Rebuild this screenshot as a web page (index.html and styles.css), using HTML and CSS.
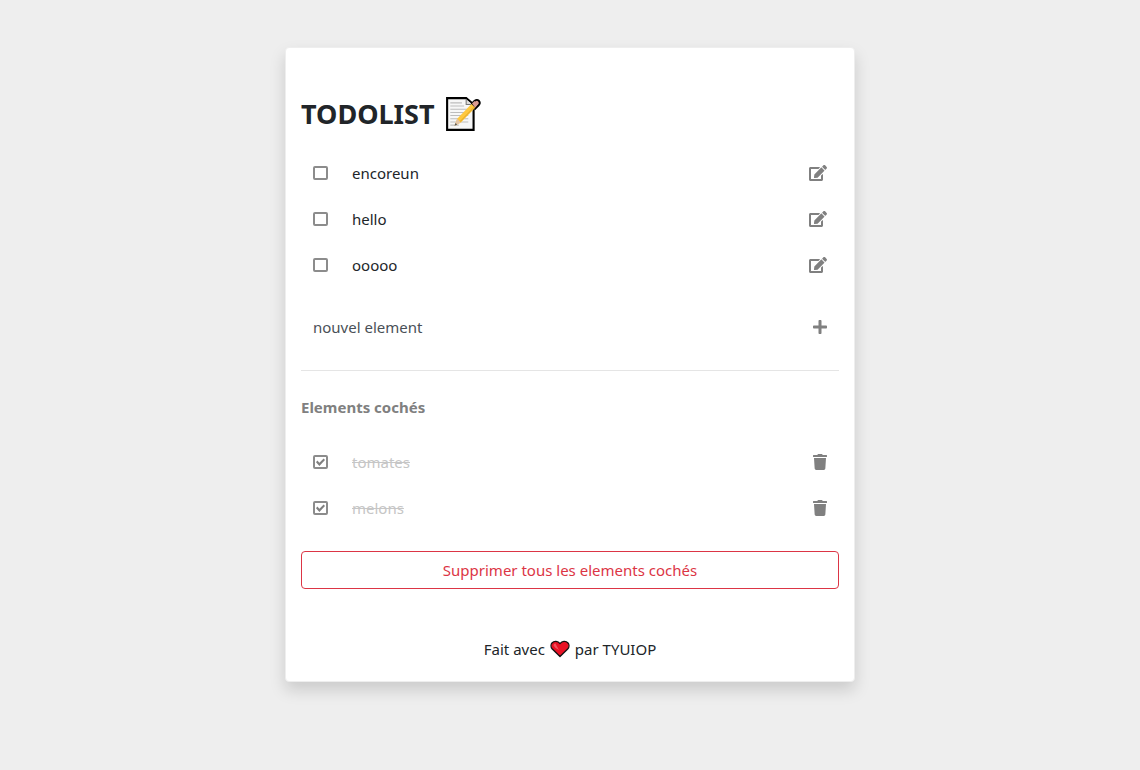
FILE: index.html
```html
<!DOCTYPE html>
<html lang="fr">
<head>
  <meta charset="utf-8">
  <meta name="viewport" content="width=device-width, initial-scale=1">
  <title>Todolist</title>
  <link rel="stylesheet" href="styles.css">
</head>
<body>
  <svg class="sprite" aria-hidden="true">
    <symbol id="icon-edit" viewBox="0 0 576 512"><path d="M402.6 83.2l90.2 90.2c3.8 3.8 3.8 10 0 13.800L274.400 405.600l-92.800 10.300c-12.400 1.400-22.900-9.100-21.500-21.500l10.300-92.800L388.800 83.200c3.800-3.800 10-3.800 13.800 0zm162-22.900l-48.800-48.800c-15.200-15.200-39.900-15.200-55.200 0l-35.400 35.400c-3.800 3.800-3.800 10 0 13.800l90.200 90.200c3.800 3.800 10 3.800 13.800 0l35.400-35.400c15.200-15.300 15.200-40 0-55.200zM384 346.200V448H64V128h229.800c3.200 0 6.200-1.300 8.500-3.500l40-40c7.600-7.600 2.200-20.500-8.500-20.500H48C21.500 64 0 85.500 0 112v352c0 26.500 21.500 48 48 48h352c26.500 0 48-21.500 48-48V306.200c0-10.700-12.900-16-20.500-8.500l-40 40c-2.200 2.300-3.500 5.300-3.500 8.500z"/></symbol>
    <symbol id="icon-trash" viewBox="0 0 448 512"><path d="M432 32H312l-9.400-18.700A24 24 0 0 0 281.100 0H166.800a23.720 23.720 0 0 0-21.400 13.300L136 32H16A16 16 0 0 0 0 48v32a16 16 0 0 0 16 16h416a16 16 0 0 0 16-16V48a16 16 0 0 0-16-16zM53.200 467a48 48 0 0 0 47.900 45h245.800a48 48 0 0 0 47.900-45L416 128H32z"/></symbol>
    <symbol id="icon-plus" viewBox="0 0 448 512"><path d="M416 208H272V64c0-17.670-14.330-32-32-32h-32c-17.670 0-32 14.330-32 32v144H32c-17.670 0-32 14.330-32 32v32c0 17.670 14.330 32 32 32h144v144c0 17.670 14.330 32 32 32h32c17.670 0 32-14.330 32-32V304h144c17.670 0 32-14.330 32-32v-32c0-17.670-14.330-32-32-32z"/></symbol>
  </svg>

  <main class="card">
    <h1 class="title">TODOLIST
      <svg class="memo" viewBox="0 0 34 34" aria-hidden="true">
        <path d="M2 2h18l7 6v24H2z" fill="#f7f7f7" stroke="#000" stroke-width="2"/>
        <path d="M20 3v5h6" fill="#ddd" stroke="#777"/>
        <path d="M5 6.500h11M5 9.500h13M5 12.500h17M5 15.500h17M5 18.500h17M5 21.500h17M5 24.500h17M5 27.500h8" stroke="#bdbdbd"/>
        <path d="M25.500 7L28 4.500q2.200-1.700 4 0 1.700 2 0 4L28.500 12z" fill="#d99a90" stroke="#000" stroke-width="1.800"/>
        <path d="M25 7.500L11.500 21.500l-2.500 6.500 6-3L28.500 11z" fill="#ffc83d"/>
        <path d="M27.800 10.300L14.300 24.300" stroke="#e9ae2c"/>
        <path d="M25.500 7L28 4.800l3 3L28.500 11z" fill="#d99a90"/>
        <path d="M11.500 21.500L9 28l6-3z" fill="#e3c4a6"/>
        <path d="M10 25.500L9 28l2.500-1.200z" fill="#555"/>
      </svg>
    </h1>

    <ul class="list">
      <li class="row">
        <input class="tick" type="checkbox" id="t1"><label class="name" for="t1">encoreun</label>
        <button class="action" type="button" aria-label="Modifier encoreun"><svg class="icon icon-wide"><use href="#icon-edit"/></svg></button>
      </li>
      <li class="row">
        <input class="tick" type="checkbox" id="t2"><label class="name" for="t2">hello</label>
        <button class="action" type="button" aria-label="Modifier hello"><svg class="icon icon-wide"><use href="#icon-edit"/></svg></button>
      </li>
      <li class="row">
        <input class="tick" type="checkbox" id="t3"><label class="name" for="t3">ooooo</label>
        <button class="action" type="button" aria-label="Modifier ooooo"><svg class="icon icon-wide"><use href="#icon-edit"/></svg></button>
      </li>
    </ul>

    <form class="row new-item">
      <input class="field" type="text" placeholder="nouvel element" aria-label="nouvel element">
      <button class="action" type="button" aria-label="Ajouter"><svg class="icon"><use href="#icon-plus"/></svg></button>
    </form>

    <hr class="rule">

    <h2 class="subtitle">Elements cochés</h2>
    <ul class="list">
      <li class="row">
        <input class="tick" type="checkbox" id="d1" checked><label class="name" for="d1">tomates</label>
        <button class="action" type="button" aria-label="Supprimer tomates"><svg class="icon"><use href="#icon-trash"/></svg></button>
      </li>
      <li class="row">
        <input class="tick" type="checkbox" id="d2" checked><label class="name" for="d2">melons</label>
        <button class="action" type="button" aria-label="Supprimer melons"><svg class="icon"><use href="#icon-trash"/></svg></button>
      </li>
    </ul>

    <button class="clear" type="button">Supprimer tous les elements cochés</button>

    <footer class="footer">
      <span>Fait avec</span>
      <svg class="heart" viewBox="0 0 20 18" aria-hidden="true">
        <path d="M10 16.500L2.300 9C.5 7 .7 4.200 2.200 2.700 4.300.7 7.800.9 10 3.600 12.200.9 15.700.7 17.800 2.700c1.500 1.500 1.700 4.300-.1 6.300z" fill="#e81224" stroke="#111" stroke-width="1.300" stroke-linejoin="round"/>
        <path d="M3.500 5.500q0-1.800 2-2l1.500 3 2 3.500q-4-1.500-5.500-4.500z" fill="#f1525c"/>
      </svg>
      <span>par TYUIOP</span>
    </footer>
  </main>
</body>
</html>
```
FILE: styles.css
```css
*,
*::before {
  box-sizing: border-box;
}

body {
  margin: 0;
  padding: 47px 16px;
  background: #eee;
  color: #212529;
  font: 15px/24px "Segoe UI", "Noto Sans", "Open Sans", sans-serif;
}

.sprite {
  display: none;
}

.card {
  max-width: 570px;
  margin: 0 auto;
  padding: 48px 15px 20px;
  background: #fff;
  border: 1px solid #eee;
  border-radius: 4px;
  box-shadow: 0 8px 16px rgba(0, 0, 0, 0.15);
}

.title {
  display: flex;
  align-items: center;
  gap: 10px;
  margin: 0 0 18px;
  font-size: 27px;
  line-height: 36px;
}

.memo {
  width: 36px;
  height: 36px;
  fill: none;
}

.list {
  margin: 0;
  padding: 0;
  list-style: none;
}

.row {
  display: flex;
  align-items: center;
  height: 46px;
  padding: 0 12px;
}

.tick {
  display: grid;
  place-items: center;
  appearance: none;
  width: 15px;
  height: 14px;
  margin: 0 24px 0 0;
  border: 2px solid #8c8c8c;
  border-radius: 2px;
}

.tick:checked::before {
  content: "";
  width: 9px;
  height: 8px;
  background: #808080;
  clip-path: polygon(0 52%, 15% 32%, 38% 60%, 85% 5%, 100% 24%, 38% 100%);
}

.name {
  flex: 1;
}

.tick:checked + .name {
  color: #c6c6c6;
  text-decoration: line-through;
}

.action {
  display: flex;
  padding: 0;
  border: 0;
  background: none;
  color: #808080;
  cursor: pointer;
}

.icon {
  width: 14px;
  height: 16px;
  fill: currentColor;
}

.icon-wide {
  width: 18px;
}

.new-item {
  margin-top: 16px;
}

.field {
  flex: 1;
  min-width: 0;
  padding: 0;
  border: 0;
  outline: 0;
  background: none;
  color: #495057;
  font: inherit;
}

.field::placeholder {
  color: #495057;
  opacity: 1;
}

.rule {
  margin: 20px 0 24px;
  border: 0;
  border-top: 1px solid #e5e5e5;
}

.subtitle {
  margin: 0 0 20px;
  color: #808080;
  font-size: 15px;
  line-height: 24px;
}

.clear {
  display: block;
  width: 100%;
  margin-top: 20px;
  padding: 6px 12px;
  border: 1px solid #dc3545;
  border-radius: 4px;
  background: none;
  color: #dc3545;
  font: inherit;
  cursor: pointer;
}

.footer {
  display: flex;
  justify-content: center;
  align-items: center;
  gap: 5px;
  margin-top: 48px;
}

.heart {
  width: 20px;
  height: 18px;
}
```
